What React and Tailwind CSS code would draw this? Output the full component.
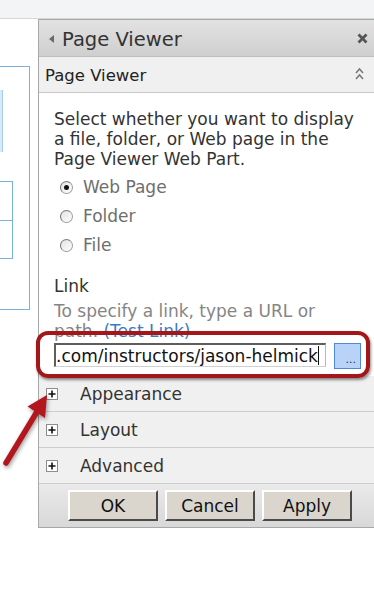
import React from 'react';

const font = { fontFamily: '"DejaVu Sans", Verdana, sans-serif' };

function Radio({ checked, label }) {
  return (
    <div className="flex items-center h-[29px] pl-[6px]">
      <span className="relative w-[13px] h-[13px] rounded-full border border-[#9c9c9c] border-l-[#6f6f6f] border-t-[#7d7d7d] bg-gradient-to-br from-[#e2e2e2] to-white shrink-0 flex items-center justify-center">
        {checked && <span className="w-[5px] h-[5px] rounded-full bg-[#111]" />}
      </span>
      <span className="ml-[10px] text-[17px] leading-[29px] text-[#6e6e6e]">{label}</span>
    </div>
  );
}

function Section({ label }) {
  return (
    <div className="flex items-center h-[36px] border-b border-[#cdcdcd] bg-[#f0f0f0] pl-[7px]">
      <span className="w-[12px] h-[12px] bg-white border border-[#8c8c8c] flex items-center justify-center shrink-0">
        <svg width="8" height="8" viewBox="0 0 8 8"><path d="M4 0.5v7M0.5 4h7" stroke="#111" strokeWidth="1.6" /></svg>
      </span>
      <span className="ml-[22px] text-[17px] leading-[20px] text-[#333]">{label}</span>
    </div>
  );
}

function Btn({ children }) {
  return (
    <button type="button" className="w-[90px] h-[31px] bg-[#dad6ce] border-t-2 border-l-2 border-t-white border-l-white border-r-2 border-b-2 border-r-[#4a4a4a] border-b-[#4a4a4a] text-[17px] text-[#111] leading-[20px]">
      {children}
    </button>
  );
}

export default function App() {
  return (
    <div className="w-[374px] h-[589px] relative bg-white overflow-hidden" style={font}>
      <div className="h-[19px] bg-[#f2f4f6] border-b border-[#d3d8dd]" />
      <div className="flex">
        {/* left page edge */}
        <div className="w-[38px] shrink-0">
          <div className="mt-[47px] w-[30px] h-[244px] border-t border-r border-b border-[#78b2df]">
            <div className="mt-[23px] w-[3px] h-[62px] bg-[#d5e9f8] border-r border-[#a6cdee]" />
            <div className="mt-[29px] w-[13px] border border-l-0 border-[#78b2df]">
              <div className="h-[39px] border-b border-[#78b2df]" />
              <div className="h-[37px]" />
            </div>
          </div>
        </div>

        {/* tool pane */}
        <div className="flex-1 h-[509px] border-l border-t border-b border-[#a8a8a8] flex flex-col">
          <div className="h-[37px] border-b border-[#bdbdbd] bg-gradient-to-b from-[#e2e2e2] to-[#cfcfcf] flex items-start pl-[10px] pr-[6px] pt-[8px]">
            <span className="mt-[7px] w-0 h-0 border-y-[4.5px] border-y-transparent border-r-[5px] border-r-[#6a6a6a]" />
            <span className="ml-[8px] text-[19.5px] leading-[23px] text-[#333]">Page Viewer</span>
            <svg className="ml-auto mt-[5px]" width="11" height="11" viewBox="0 0 11 11">
              <path d="M1.5 1.5l8 8M9.5 1.5l-8 8" stroke="#555" strokeWidth="2.8" />
            </svg>
          </div>
          <div className="h-[36px] border-b border-[#c9c9c9] bg-[#f0f0f0] flex items-start pl-[6px] pr-[10px] pt-[9px]">
            <span className="text-[16.5px] leading-[19px] text-[#222]">Page Viewer</span>
            <svg className="ml-auto mt-[1px]" width="9" height="14" viewBox="0 0 9 14">
              <path d="M1 6l3.5-4 3.5 4M1 12l3.5-4 3.5 4" stroke="#777" strokeWidth="1.5" fill="none" />
            </svg>
          </div>

          <div className="bg-white pl-[15px] pt-[16px] pb-[7px] text-[17px] leading-[20px]">
            <p className="text-[#333]">
              Select whether you want to display<br />
              a file, folder, or Web page in the<br />
              Page Viewer Web Part.
            </p>
            <div className="mt-[4px]">
              <Radio checked label="Web Page" />
              <Radio label="Folder" />
              <Radio label="File" />
            </div>
            <div className="mt-[16px] text-[#333]">Link</div>
            <p className="mt-[5px] text-[#858585]">
              To specify a link, type a URL or<br />
              path. <span className="text-[#3a7cc4]">(Test Link)</span>
            </p>
            <div className="mt-[2px] flex items-start h-[26px]">
              <div className="w-[272px] h-[24px] bg-white border-t-2 border-l-2 border-t-[#5e5e5e] border-l-[#5e5e5e] border-r border-b border-r-[#b8b8b8] border-b-[#d0d0d0] flex items-center overflow-hidden">
                <span className="whitespace-nowrap text-[17px] leading-[20px] text-[#111]">.com/instructors/jason-helmick</span>
                <span className="w-px h-[19px] bg-[#111]" />
              </div>
              <div className="ml-[8px] w-[27px] h-[26px] bg-[#b9d2f7] border border-[#4f88d6] flex items-end justify-end pr-[4px]">
                <span className="text-[11px] leading-[12px] text-[#334] mb-[2px]">...</span>
              </div>
            </div>
          </div>

          <Section label="Appearance" />
          <Section label="Layout" />
          <Section label="Advanced" />

          <div className="flex-1 bg-gradient-to-b from-[#eaeaea] to-[#d8d8d8] flex gap-[7px] pl-[29px] pt-[6px]">
            <Btn>OK</Btn>
            <Btn>Cancel</Btn>
            <Btn>Apply</Btn>
          </div>
        </div>
      </div>

      {/* annotation */}
      <div className="absolute left-[36px] top-[331px] w-[334px] h-[47px] border-[4px] border-[#a3161a] rounded-[12px] shadow-[1px_2px_3px_rgba(0,0,0,0.45)]" />
      <svg className="absolute left-0 top-[390px] drop-shadow-[1px_2px_2px_rgba(0,0,0,0.4)]" width="60" height="80" viewBox="0 0 60 80">
        <path d="M6 73L38 20" stroke="#b3161c" strokeWidth="5.5" strokeLinecap="round" />
        <path d="M47 5L45 28L27.5 16.5Z" fill="#b3161c" />
      </svg>
    </div>
  );
}
